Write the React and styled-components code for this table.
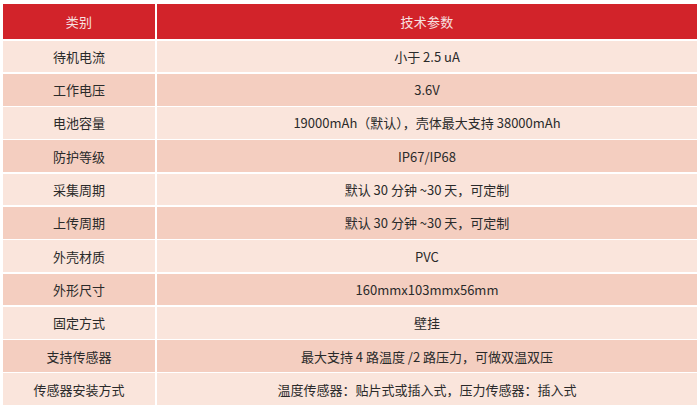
import React from "react";
import styled, { createGlobalStyle } from "styled-components";

const GlobalStyle = createGlobalStyle`
  html, body {
    margin: 0;
    padding: 0;
    background: #ffffff;
  }
  body {
    font-family: "Noto Sans CJK SC", "Noto Sans", sans-serif;
  }
`;

const Page = styled.div`
  width: 700px;
  height: 407px;
  padding: 4px 3px 0 3px;
  box-sizing: border-box;
  overflow: hidden;
`;

const Table = styled.div`
  display: grid;
  grid-template-columns: 152px 1fr;
  column-gap: 2px;
  row-gap: 1.5px;
`;

const HeadCell = styled.div`
  height: 35px;
  display: flex;
  align-items: center;
  justify-content: center;
  background: #d2232a;
  color: #f7e1e1;
  font-size: 13px;
  font-weight: 400;
  letter-spacing: 0.2px;
`;

const Cell = styled.div`
  height: 31.8px;
  display: flex;
  align-items: center;
  justify-content: center;
  background: ${(p) => (p.$dark ? "#f4cec0" : "#fae5dc")};
  color: #2a2a2a;
  font-size: 13px;
  font-weight: 400;
  white-space: nowrap;
`;

const rows = [
  ["待机电流", "小于 2.5 uA"],
  ["工作电压", "3.6V"],
  ["电池容量", "19000mAh（默认），壳体最大支持 38000mAh"],
  ["防护等级", "IP67/IP68"],
  ["采集周期", "默认 30 分钟 ~30 天，可定制"],
  ["上传周期", "默认 30 分钟 ~30 天，可定制"],
  ["外壳材质", "PVC"],
  ["外形尺寸", "160mmx103mmx56mm"],
  ["固定方式", "壁挂"],
  ["支持传感器", "最大支持 4 路温度 /2 路压力，可做双温双压"],
  ["传感器安装方式", "温度传感器：贴片式或插入式，压力传感器：插入式"],
];

export default function App() {
  return (
    <Page>
      <GlobalStyle />
      <Table>
        <HeadCell>类别</HeadCell>
        <HeadCell>技术参数</HeadCell>
        {rows.map(([name, value], i) => (
          <React.Fragment key={name}>
            <Cell $dark={i % 2 === 1}>{name}</Cell>
            <Cell $dark={i % 2 === 1}>{value}</Cell>
          </React.Fragment>
        ))}
      </Table>
    </Page>
  );
}
